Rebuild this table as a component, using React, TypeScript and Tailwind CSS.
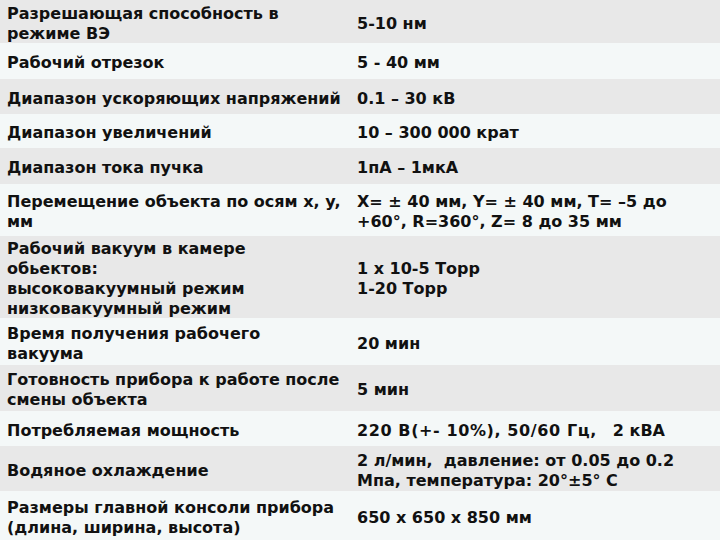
import type { ReactNode } from "react";

const rows: { h: string; left: ReactNode[]; right: ReactNode[] }[] = [
  { h: "h-[43px]", left: ["Разрешающая способность в", "режиме ВЭ"], right: ["5-10 нм"] },
  { h: "h-[36px]", left: ["Рабочий отрезок"], right: ["5 - 40 мм"] },
  { h: "h-[35px]", left: ["Диапазон ускоряющих напряжений"], right: ["0.1 – 30 кВ"] },
  { h: "h-[34px]", left: ["Диапазон увеличений"], right: ["10 – 300 000 крат"] },
  { h: "h-[36px]", left: ["Диапазон тока пучка"], right: ["1пА – 1мкА"] },
  {
    h: "h-[52px]",
    left: ["Перемещение объекта по осям x, y,", "мм"],
    right: ["X= ± 40 мм, Y= ± 40 мм, T= –5 до", "+60°, R=360°, Z= 8 до 35 мм"],
  },
  {
    h: "h-[82px]",
    left: ["Рабочий вакуум в камере", "обьектов:", "высоковакуумный режим", "низковакуумный режим"],
    right: ["1 x 10-5 Торр", "1-20 Торр"],
  },
  { h: "h-[47px]", left: ["Время получения рабочего", "вакуума"], right: ["20 мин"] },
  { h: "h-[46px]", left: ["Готовность прибора к работе после", "смены объекта"], right: ["5 мин"] },
  {
    h: "h-[35px]",
    left: ["Потребляемая мощность"],
    right: [
      <>
        <span className="tracking-[0.6px]">220 В(+- 10%), 50/60 Гц,</span>
        <span className="ml-[16px]">2 кВА</span>
      </>,
    ],
  },
  {
    h: "h-[45px]",
    left: ["Водяное охлаждение"],
    right: ["2 л/мин,  давление: от 0.05 до 0.2", "Мпа, температура: 20°±5° С"],
  },
  { h: "h-[49px]", left: ["Размеры главной консоли прибора", "(длина, ширина, высота)"], right: ["650 x 650 x 850 мм"] },
];

function Cell({ lines, className }: { lines: ReactNode[]; className: string }) {
  return (
    <div className={`flex flex-col justify-center whitespace-pre ${className}`}>
      <div className="translate-y-[2px]">
        {lines.map((l, i) => (
          <div key={i}>{l}</div>
        ))}
      </div>
    </div>
  );
}

export default function App() {
  return (
    <div className="w-[720px] h-[540px] overflow-hidden bg-[#f4f8f8] font-['DejaVu_Sans',Verdana,sans-serif] font-bold text-[16px] leading-[20px] text-[#111]">
      {rows.map((r, i) => (
        <div key={i} className={`flex ${r.h} ${i % 2 === 0 ? "bg-[#e8e8e8]" : "bg-[#f4f8f8]"}`}>
          <Cell lines={r.left} className="w-[350px] pl-[7px]" />
          <Cell lines={r.right} className="flex-1 pl-[7px]" />
        </div>
      ))}
    </div>
  );
}
